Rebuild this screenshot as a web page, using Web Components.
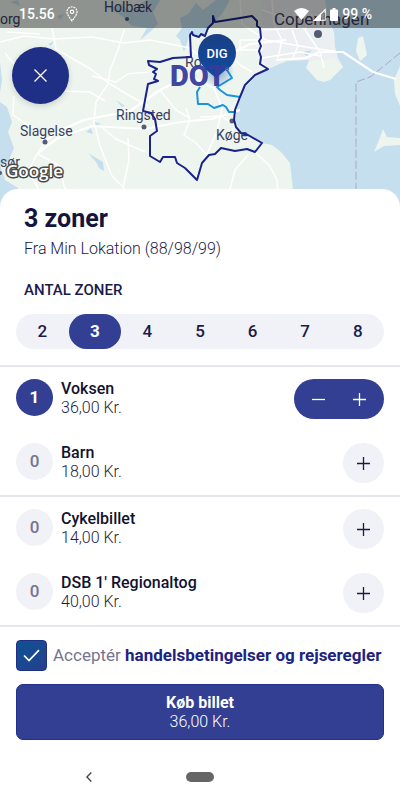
<!DOCTYPE html>
<html lang="da">
<head>
<meta charset="utf-8">
<meta name="viewport" content="width=device-width, initial-scale=1">
<title>Køb billet</title>
<style>
  body {
    margin: 0;
    min-height: 100vh;
    background: #fff;
    font-family: Roboto, "Liberation Sans", sans-serif;
    color: #1b1b4b;
    --brand: #323f92;
    --brand-dark: #1f2f86;
    --soft: #f1f2f8;
    --line: #e5e5ee;
  }
</style>
</head>
<body>
<ticket-screen></ticket-screen>

<script>
// Small helper shared by all elements: clones the markup into an open shadow root
class BaseElement extends HTMLElement {
  constructor() {
    super();
    const template = document.createElement('template');
    template.innerHTML = this.render();
    this.attachShadow({ mode: 'open' });
    this.shadowRoot.appendChild(template.content.cloneNode(true));
  }
}

// Clock and system icons on top of the map
class StatusBar extends BaseElement {
  render() {
    return `
      <style>
        :host {
          display: flex;
          align-items: center;
          justify-content: space-between;
          height: 28px;
          padding: 0 28px 0 19px;
          box-sizing: border-box;
          background: rgba(0, 0, 0, 0.4);
          color: #fff;
          font-size: 14px;
          font-weight: 500;
        }
        div { display: flex; align-items: center; }
        .left { gap: 11px; }
        .right { gap: 4px; }
        svg { display: block; }
      </style>
      <div class="left">
        <span>15.56</span>
        <svg width="12" height="16" viewBox="0 0 12 16" fill="none" stroke="#fff" stroke-width="1.200">
          <path d="M6 15C3 10.600 1 8.500 1 5.800a5 5 0 0 1 10 0C11 8.500 9 10.600 6 15z" stroke-dasharray="2 .8"/>
          <circle cx="6" cy="5.800" r="1.700"/>
        </svg>
      </div>
      <div class="right">
        <svg width="15" height="12" viewBox="0 0 15 12" fill="#fff"><path d="M0 3Q7.500-3 15 3L7.500 12z"/></svg>
        <svg width="13" height="13" viewBox="0 0 13 13"><path d="M1.500 12.200H12.200V1.500z" fill="none" stroke="#fff" stroke-width="1.100"/><path d="M0 13L8 5V13z" fill="#fff"/></svg>
        <svg width="8" height="13" viewBox="0 0 8 13" fill="#fff"><path d="M2.500 0h3v1.500H7q1 0 1 1V12q0 1-1 1H1q-1 0-1-1V2.500q0-1 1-1h1.500z"/></svg>
        <span>99 %</span>
      </div>
    `;
  }
}

// Map with the zone outline, city names and the location pin
class ZoneMap extends BaseElement {
  render() {
    return `
      <style>
        :host { display: block; height: 212px; background: #edf5ee; }
        svg { display: block; width: 100%; height: 100%; }
        .city { font-size: 14px; fill: #3b3f63; }
        .city .big { font-size: 17px; }
      </style>
      <svg viewBox="0 0 400 212" preserveAspectRatio="xMidYMid slice" role="img" aria-label="Zonekort">
        <defs>
          <linearGradient id="pin" x1="0" y1="0" x2="0" y2="1">
            <stop offset="0" stop-color="#1a3f86"/>
            <stop offset="1" stop-color="#104a9c"/>
          </linearGradient>
          <radialGradient id="glow">
            <stop offset="0" stop-color="#1c56b0" stop-opacity=".5"/>
            <stop offset="1" stop-color="#1c56b0" stop-opacity="0"/>
          </radialGradient>
        </defs>
        <rect width="400" height="212" fill="#edf5ee"/>
        <!-- built-up area -->
        <path d="M262 0H326L335 46L343 67L330 79L306 62L287 60L268 68L262 58Z" fill="#eceff1"/>
        <!-- water -->
        <g fill="#c5dfef">
          <path d="M325 0L328 20L334 32L335 47L338 58L343 67L337 72L330 80L324 82L317 80L306 68L309 60L287 61L272 67L255 77L246 87L240 97L236 112L235 122L243 134L262 143L272 145L281 152L290 163L293 190V212H400V0Z"/>
          <path d="M302 52L312 50L307 57Z"/>
          <path d="M0 102L7 107L12 122L8 132L14 148L8 162L0 165ZM0 165L5 180L18 188L18 212H0ZM0 62L2 80L0 92Z"/>
          <path d="M110 8L122 4L130 12L146 0H160L153 12L158 24L150 32L140 40L147 28L132 26L122 16Z"/>
          <path d="M180 18L188 14L196 3L203 10L216 0H230L222 14L212 24L204 36L190 34L184 52L180 40L176 36L182 28Z"/>
          <path d="M48 44L54 41L51 46ZM116 100L125 106L122 107ZM86 132L91 128L93 134ZM88 153L103 162L104 171L99 168L96 162ZM95 122L101 124L95 126ZM10 2L18 0L20 6ZM57 16L64 14L60 20Z"/>
        </g>
        <g fill="#edf5ee">
          <path d="M363 36L367 55L360 61L356 51L358 38Z"/>
          <path d="M383 129L387 137L400 138V145L384 146L374 152L379 140ZM394 80L400 66V106L395 94Z"/>
          <path d="M322 60L334 58L343 67L330 80L317 80L307 68L310 61Z"/>
        </g>
        <!-- roads -->
        <g fill="none" stroke="#fff" stroke-width="1.500" stroke-linejoin="round">
          <path d="M0 42L24 36L54 39L92 37L124 43L150 40L190 48L206 61"/>
          <path d="M52 28L56 49L92 70L107 82L130 96L148 106"/>
          <path d="M124 30L118 50L110 70L108 84L96 102L94 122L100 146L112 176L126 190"/>
          <path d="M14 96L13 115L34 129L45 142L37 154L28 172L37 186L45 212"/>
          <path d="M38 153L58 138L92 126L145 129L180 122L212 119L240 110" stroke-width="2.200"/>
          <path d="M45 142L56 132L84 120L130 111L160 90L192 74L218 60L250 44L286 40" stroke-width="2.200"/>
          <path d="M62 91L90 92L105 101M92 76L116 82L128 74L148 72M5 53L14 64M7 32L40 34"/>
          <path d="M128 138L129 160L123 188M186 108L190 120L184 135L196 143L206 154M196 178L206 156L217 132L222 108L214 88L192 77"/>
          <path d="M248 155L235 170L230 189M255 152L270 166L277 180L278 200M232 130L236 126L221 116L200 117"/>
          <path d="M38 154L60 166L64 186L78 212M100 126L116 139L145 152M160 90L176 110L190 118"/>
          <path d="M206 61L228 52L240 65L252 72M240 0L242 24L266 40L300 46L338 52"/>
          <path d="M240 40H262V50H240ZM272 0L274 24L282 40L278 58M292 30L298 46L292 60M262 30L300 28M262 10L292 20L306 30M312 14L305 30L320 52L324 68M262 58L300 52L320 56"/>
          <path d="M276 60L305 58L320 52H343L373 72L396 79" stroke-width="2.200"/>
        </g>
        <path d="M400 53L384 66L370 77L356 82V212" fill="none" stroke="#a9a9c4" stroke-width="1" stroke-dasharray="8 3"/>

        <!-- cities -->
        <g fill="#565a75">
          <circle cx="127" cy="19" r="2"/><circle cx="144" cy="127" r="2.500"/>
          <circle cx="45" cy="142" r="2.500"/><circle cx="232" cy="121" r="2.500"/>
          <circle cx="318" cy="34" r="4"/><circle cx="0" cy="173" r="2"/>
        </g>
        <g class="city">
          <text x="104" y="12">Holbæk</text>
          <text x="0" y="24">org</text>
          <text x="116" y="120">Ringsted</text>
          <text x="20" y="136">Slagelse</text>
          <text x="216" y="140">Køge</text>
          <text x="185" y="67">Ro</text>
          <text x="0" y="167">sør</text>
          <text class="big" x="274" y="25">Copenhagen</text>
        </g>

        <!-- zone borders -->
        <g fill="none" stroke-linejoin="round" stroke-width="2">
          <path d="M200 87L197 92L198 104L208 104L214 108L223 105L226 107L229 112H236M227 70L232 78L217 87L220 90L227 95L240 97" stroke="#1c94dc"/>
          <path d="M148 61L149 65L157 69L153 72L156 74L154 79L158 81L148 84L143 111L151 113L155 119L157 131L150 136L150 156L160 162L163 157L175 157L177 163L185 168L197 180L202 163L209 155L215 154L221 148L235 151L247 149L255 152L262 143L248 135L241 133L236 127L234 120L235 110L240 97L245 85L255 75L268 69L260 64L261 57L259 51L261 46L259 41L261 38L260 28L257 26V21L252 16L234 19L215 22L213 16L213 23L208 28L205 36L201 34L199 37L193 35L192 32L190 35L191 57L173 58L160 62Z" stroke="#1a238b"/>
        </g>

        <!-- pin -->
        <circle cx="218" cy="72" r="16" fill="url(#glow)"/>
        <path d="M216 78L204 68L228 68Z" fill="#104a9c"/>
        <circle cx="217" cy="53" r="19" fill="url(#pin)"/>
        <text x="217" y="58" font-size="13" font-weight="500" fill="#fff" text-anchor="middle">DIG</text>
        <text x="170" y="86" font-size="29" font-weight="900" fill="#363c9c" fill-opacity=".95">DOT</text>
        <circle cx="227" cy="69" r="1.500" fill="none" stroke="#4a55a8"/>
        <text x="6" y="177" font-size="17" font-family="Open Sans, sans-serif" font-weight="600" fill="#fff" stroke="#4b4b4b" stroke-width="3" stroke-linejoin="round" paint-order="stroke">Google</text>
      </svg>
    `;
  }
}

class CloseButton extends BaseElement {
  render() {
    return `
      <style>
        :host { display: block; }
        button {
          display: grid;
          place-items: center;
          width: 57px;
          height: 57px;
          padding: 0;
          border: 0;
          border-radius: 50%;
          background: var(--brand-dark);
          box-shadow: 0 2px 6px rgba(0, 0, 0, 0.15);
        }
      </style>
      <button type="button" aria-label="Luk">
        <svg width="13" height="13" viewBox="0 0 13 13" stroke="#fff" stroke-width="1.300"><path d="M.5.500L12.500 12.500M12.500.500L.5 12.500"/></svg>
      </button>
    `;
  }
}

// Segmented control made of radio buttons
class ZonePicker extends BaseElement {
  render() {
    const selected = this.getAttribute('value') || '3';
    const items = [2, 3, 4, 5, 6, 7, 8].map((n) => `
      <label><input type="radio" name="zones" value="${n}" ${String(n) === selected ? 'checked' : ''}><span>${n}</span></label>
    `).join('');
    return `
      <style>
        :host { display: block; }
        fieldset { margin: 0; padding: 0; border: 0; min-width: 0; }
        legend {
          padding: 0 8px;
          margin-bottom: 14px;
          font-size: 15px;
          line-height: 20px;
          font-weight: 500;
        }
        .track {
          display: grid;
          grid-template-columns: repeat(7, 1fr);
          border-radius: 18px;
          background: var(--soft);
        }
        label { display: grid; }
        input, span { grid-area: 1 / 1; }
        input { appearance: none; margin: 0; border-radius: 18px; }
        input:checked { background: var(--brand); }
        span {
          font-size: 17px;
          line-height: 35px;
          font-weight: 500;
          text-align: center;
          pointer-events: none;
        }
        input:checked + span { color: #fff; font-weight: 700; }
      </style>
      <fieldset>
        <legend>ANTAL ZONER</legend>
        <div class="track">${items}</div>
      </fieldset>
    `;
  }
}

// One ticket type with its count, name, price and stepper
class TicketRow extends HTMLElement {
  connectedCallback() {
    if (this.shadowRoot) return;
    this.attachShadow({ mode: 'open' });
    this.count = Number(this.getAttribute('count')) || 0;
    this.update();
  }

  update() {
    const active = this.count > 0;
    this.shadowRoot.innerHTML = `
      <style>
        :host { display: flex; align-items: flex-start; gap: 8px; }
        output {
          width: 37px;
          line-height: 37px;
          border-radius: 50%;
          background: var(--soft);
          color: #747590;
          font-size: 17px;
          font-weight: 500;
          text-align: center;
        }
        output.active { background: var(--brand); color: #fff; font-weight: 700; }
        .info { flex: 1; line-height: 19px; }
        .name { font-size: 16px; font-weight: 500; color: #111130; }
        .price { font-size: 16px; font-weight: 300; color: #1b1b4b; }
        .stepper { display: flex; border-radius: 20px; background: var(--soft); color: #1b1b3b; }
        .stepper.active { background: var(--brand); color: #fff; padding: 0 4px; }
        button {
          display: grid;
          place-items: center;
          width: 41px;
          height: 40px;
          padding: 0;
          border: 0;
          background: none;
          color: inherit;
        }
        svg { stroke: currentColor; stroke-width: 1.300; }
      </style>
      <output class="${active ? 'active' : ''}">${this.count}</output>
      <div class="info">
        <div class="name"><slot></slot></div>
        <div class="price"><slot name="price"></slot></div>
      </div>
      <div class="stepper ${active ? 'active' : ''}">
        ${active ? `<button type="button" class="minus" aria-label="Fjern"><svg width="13" height="13" viewBox="0 0 13 13"><path d="M0 6.500H13"/></svg></button>` : ''}
        <button type="button" class="plus" aria-label="Tilføj"><svg width="13" height="13" viewBox="0 0 13 13"><path d="M0 6.500H13M6.500 0V13"/></svg></button>
      </div>
    `;
    const minus = this.shadowRoot.querySelector('.minus');
    if (minus) minus.addEventListener('click', () => { this.count--; this.update(); });
    this.shadowRoot.querySelector('.plus').addEventListener('click', () => { this.count++; this.update(); });
  }
}

class TicketGroup extends BaseElement {
  render() {
    return `
      <style>
        :host {
          display: grid;
          gap: 24px;
          padding: 12px 16px;
          border-top: 2px solid var(--line);
        }
      </style>
      <slot></slot>
    `;
  }
}

class TermsCheck extends BaseElement {
  render() {
    return `
      <style>
        :host { display: flex; align-items: center; gap: 6px; font-size: 17px; line-height: 31px; white-space: nowrap; }
        .box { display: grid; flex: none; }
        input, svg { grid-area: 1 / 1; place-self: center; }
        input {
          appearance: none;
          width: 31px;
          height: 31px;
          margin: 0;
          border: 1px solid var(--brand-dark);
          border-radius: 4px;
          background: #fff;
        }
        input:checked { background: linear-gradient(135deg, #0f5293, #233f8e); }
        svg { pointer-events: none; }
        label { color: #747590; }
        a { color: #1c2381; font-weight: 700; text-decoration: none; }
      </style>
      <span class="box">
        <input type="checkbox" id="terms" checked>
        <svg width="17" height="13" viewBox="0 0 17 13" fill="none" stroke="#fff" stroke-width="1.700"><path d="M1 6.500L6 11.500L16 1.200"/></svg>
      </span>
      <span><label for="terms">Acceptér</label> <a href="#"><slot></slot></a></span>
    `;
  }
}

class BuyButton extends BaseElement {
  render() {
    return `
      <style>
        :host { display: block; }
        button {
          display: block;
          width: 100%;
          padding: 8px;
          border: 1px solid #222f8c;
          border-radius: 7px;
          background: var(--brand);
          color: #fff;
          font-family: inherit;
          line-height: 19px;
        }
        span { display: block; }
        .title { font-size: 16px; font-weight: 700; }
        .price { font-size: 16px; font-weight: 300; }
      </style>
      <button type="button">
        <span class="title"><slot></slot></span>
        <span class="price"><slot name="price"></slot></span>
      </button>
    `;
  }
}

// Android navigation: back arrow and home pill
class NavBar extends BaseElement {
  render() {
    return `
      <style>
        :host { display: grid; grid-template-columns: 1fr 2fr 1fr; padding: 0 52px; height: 48px; }
        button { display: grid; place-items: center; padding: 0; border: 0; background: none; }
        .pill { width: 28px; height: 10px; border-radius: 5px; background: #666; }
      </style>
      <button type="button" aria-label="Tilbage">
        <svg width="6" height="10" viewBox="0 0 6 10" fill="none" stroke="#444" stroke-width="1.400"><path d="M5.300.500L.9 5L5.300 9.500"/></svg>
      </button>
      <button type="button" aria-label="Hjem"><span class="pill"></span></button>
    `;
  }
}

class TicketScreen extends BaseElement {
  render() {
    return `
      <style>
        :host { display: block; }
        .map { position: relative; }
        .over { position: absolute; inset: 0 0 auto 0; }
        close-button { padding: 19px 12px; }
        main {
          position: relative;
          margin-top: -23px;
          border-radius: 18px 18px 0 0;
          background: #fff;
        }
        header { padding: 14px 24px 19px; }
        h1 { margin: 0; font-size: 25px; line-height: 32px; font-weight: 700; color: #14143c; }
        p { margin: 2px 0 0; font-size: 16px; line-height: 24px; font-weight: 300; }
        zone-picker { padding: 0 16px 16px; }
        footer {
          display: grid;
          gap: 13px;
          padding: 13px 16px;
          border-top: 2px solid var(--line);
        }
      </style>
      <div class="map">
        <zone-map></zone-map>
        <div class="over">
          <status-bar></status-bar>
          <close-button></close-button>
        </div>
      </div>
      <main>
        <header>
          <h1>3 zoner</h1>
          <p>Fra Min Lokation (88/98/99)</p>
        </header>
        <zone-picker></zone-picker>
        <ticket-group>
          <ticket-row count="1">Voksen<span slot="price">36,00 Kr.</span></ticket-row>
          <ticket-row count="0">Barn<span slot="price">18,00 Kr.</span></ticket-row>
        </ticket-group>
        <ticket-group>
          <ticket-row count="0">Cykelbillet<span slot="price">14,00 Kr.</span></ticket-row>
          <ticket-row count="0">DSB 1' Regionaltog<span slot="price">40,00 Kr.</span></ticket-row>
        </ticket-group>
        <footer>
          <terms-check>handelsbetingelser og rejseregler</terms-check>
          <buy-button>Køb billet<span slot="price">36,00 Kr.</span></buy-button>
        </footer>
      </main>
      <nav-bar></nav-bar>
    `;
  }
}

customElements.define('status-bar', StatusBar);
customElements.define('zone-map', ZoneMap);
customElements.define('close-button', CloseButton);
customElements.define('zone-picker', ZonePicker);
customElements.define('ticket-row', TicketRow);
customElements.define('ticket-group', TicketGroup);
customElements.define('terms-check', TermsCheck);
customElements.define('buy-button', BuyButton);
customElements.define('nav-bar', NavBar);
customElements.define('ticket-screen', TicketScreen);
</script>
</body>
</html>
